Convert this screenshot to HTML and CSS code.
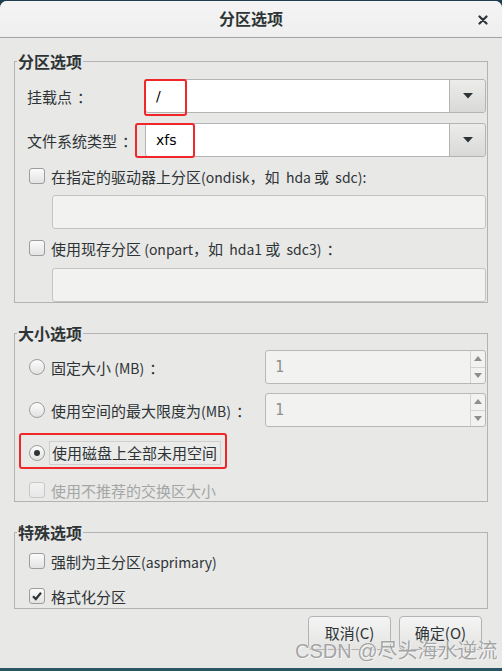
FILE: index.html
```
<!DOCTYPE html>
<html lang="zh-CN">
<head>
<meta charset="utf-8">
<title>分区选项</title>
<link rel="stylesheet" href="styles.css">
</head>
<body>
<div class="window">
  <div class="titlebar">
    <span class="title">分区选项</span>
    <svg class="close" width="10" height="10" viewBox="0 0 10 10"><path d="M1.5 1.5 L8.5 8.5 M8.5 1.5 L1.5 8.5" stroke="#2e3436" stroke-width="2.2" stroke-linecap="round"/></svg>
  </div>
  <div class="content">
    <fieldset class="group">
      <legend>分区选项</legend>
      <div class="group-body g1">
        <div class="form-row">
          <span class="label">挂载点<span class="colon">：</span></span>
          <div class="combo">
            <div class="combo-entry">/</div>
            <div class="combo-btn"><svg width="10" height="6" viewBox="0 0 10 6"><polygon points="0,0 10,0 5,5.5" fill="#2e3436"/></svg></div>
            <span class="mark mark-mount"></span>
          </div>
        </div>
        <div class="form-row r2">
          <span class="label">文件系统类型<span class="colon">：</span></span>
          <div class="combo">
            <div class="combo-entry">xfs</div>
            <div class="combo-btn"><svg width="10" height="6" viewBox="0 0 10 6"><polygon points="0,0 10,0 5,5.5" fill="#2e3436"/></svg></div>
            <span class="mark mark-fs"></span>
          </div>
        </div>
        <div class="check-row c1"><span class="checkbox"></span><span>在指定的驱动器上分区<span class="lat">(ondisk</span>，如<span class="lat">&nbsp; hda </span>或<span class="lat">&nbsp; sdc):</span></span></div>
        <div class="entry-disabled e1"></div>
        <div class="check-row c2"><span class="checkbox"></span><span>使用现存分区<span class="lat"> (onpart</span>，如<span class="lat">&nbsp; hda1 </span>或<span class="lat">&nbsp; sdc3)</span><span class="colon">：</span></span></div>
        <div class="entry-disabled e2"></div>
      </div>
    </fieldset>

    <fieldset class="group g-size">
      <legend>大小选项</legend>
      <div class="group-body g2">
        <div class="radio-row">
          <span class="radio"></span><span>固定大小<span class="lat"> (MB)</span><span class="colon">：</span></span>
          <div class="spin"><span class="spin-val">1</span><div class="stepper"><span class="step"><svg width="8" height="5" viewBox="0 0 8 5"><polygon points="0,5 8,5 4,0" fill="#8d8f8e"/></svg></span><span class="step"><svg width="8" height="5" viewBox="0 0 8 5"><polygon points="0,0 8,0 4,5" fill="#8d8f8e"/></svg></span></div></div>
        </div>
        <div class="radio-row rr2">
          <span class="radio"></span><span>使用空间的最大限度为<span class="lat">(MB)</span><span class="colon">：</span></span>
          <div class="spin"><span class="spin-val">1</span><div class="stepper"><span class="step"><svg width="8" height="5" viewBox="0 0 8 5"><polygon points="0,5 8,5 4,0" fill="#8d8f8e"/></svg></span><span class="step"><svg width="8" height="5" viewBox="0 0 8 5"><polygon points="0,0 8,0 4,5" fill="#8d8f8e"/></svg></span></div></div>
        </div>
        <div class="radio-row rr3">
          <span class="radio checked"></span><span class="focus">使用磁盘上全部未用空间</span>
          <span class="mark mark-radio"></span>
        </div>
        <div class="check-row disabled c3"><span class="checkbox"></span><span>使用不推荐的交换区大小</span></div>
      </div>
    </fieldset>

    <fieldset class="group g-special">
      <legend>特殊选项</legend>
      <div class="group-body g3">
        <div class="check-row c4"><span class="checkbox"></span><span>强制为主分区<span class="lat">(asprimary)</span></span></div>
        <div class="check-row c5"><span class="checkbox checked"><svg width="12" height="12" viewBox="0 0 12 12"><path d="M2 6.2 L4.8 9 L10 2.8" stroke="#2e3436" stroke-width="2.2" fill="none"/></svg></span><span>格式化分区</span></div>
      </div>
    </fieldset>

    <div class="buttons">
      <button class="btn">取消(C)</button>
      <button class="btn">确定(O)</button>
    </div>
  </div>
  <div class="watermark">CSDN @尽头海水逆流</div>
</div>
</body>
</html>
```

FILE: styles.css
```
* { box-sizing: border-box; }
html, body { margin: 0; padding: 0; }
body {
  width: 502px;
  height: 671px;
  overflow: hidden;
  background: linear-gradient(#1f3d4f, #2a5563);
  font-family: "Noto Sans CJK SC", "DejaVu Sans", sans-serif;
  font-size: 15px;
  color: #2e3436;
}
.window {
  position: relative;
  margin-top: 1px;
  height: 667px;
  border-radius: 7px 7px 0 0;
  background: #e8e8e7;
  overflow: hidden;
  display: flex;
  flex-direction: column;
}
.titlebar {
  height: 37px;
  flex: none;
  background: linear-gradient(#f4f4f4, #efefef);
  border-bottom: 1px solid #a3a3a3;
  display: flex;
  align-items: center;
  justify-content: center;
  position: relative;
}
.title {
  font-weight: bold;
  font-size: 16px;
  line-height: 20px;
  margin-top: -2px;
}
.close {
  position: absolute;
  right: 14px;
  top: 14px;
}
.content {
  flex: 1;
  padding: 14px 14px 0 14px;
  display: flex;
  flex-direction: column;
}
.group {
  margin: 0;
  padding: 0;
  border: 1px solid #b3b3b3;
  min-width: 0;
}
.group legend {
  font-weight: bold;
  font-size: 16px;
  line-height: 18px;
  padding: 0 1px;
  margin-left: 2px;
}
.g-size, .g-special { margin-top: 21px; }
.group-body {
  padding: 0 1px 0 12px;
  display: flex;
  flex-direction: column;
}
.g1 { padding-top: 9px; }
.g2 { padding-top: 8px; }
.g3 { padding-top: 9px; padding-bottom: 1px; }

.lat { font-size: 14px; }
.colon {
  display: inline-block;
  padding-left: 5px;
}

.form-row {
  display: flex;
  align-items: center;
  height: 34px;
}
.form-row.r2 { margin-top: 10px; }
.label {
  width: 118px;
  flex: none;
}
.combo {
  flex: 1;
  height: 34px;
  display: flex;
  border: 1px solid #b4b4b4;
  border-radius: 3px;
  position: relative;
}
.combo-entry {
  flex: 1;
  background: #fff;
  border-radius: 3px 0 0 3px;
  padding-left: 10px;
  line-height: 32px;
  color: #000;
  font-family: "DejaVu Sans", sans-serif;
  font-size: 14px;
}
.combo-btn {
  width: 36px;
  flex: none;
  border-left: 1px solid #b4b4b4;
  border-radius: 0 3px 3px 0;
  background: linear-gradient(#ececeb, #d9d9d8);
  display: flex;
  align-items: center;
  justify-content: center;
}
.mark {
  position: absolute;
  border: 2px solid #f0262a;
  border-radius: 3px;
  pointer-events: none;
}
.mark-mount { left: -2px; top: -1px; width: 43px; height: 37px; }
.mark-fs { left: -11px; top: -1px; width: 60px; height: 35px; }

.check-row {
  display: flex;
  align-items: center;
  height: 22px;
  padding-left: 2px;
  gap: 6px;
}
.c1 { margin-top: 8px; }
.c2 { margin-top: 8px; }
.c3 { margin-top: 9px; }
.c5 { margin-top: 13px; }
.check-row.disabled { color: #a4a6a5; }
.checkbox {
  width: 16px;
  height: 16px;
  flex: none;
  border: 1px solid #9d9d9d;
  border-radius: 3px;
  background: linear-gradient(#fbfbfb, #e3e3e3);
  display: flex;
  align-items: center;
  justify-content: center;
}
.disabled .checkbox {
  border-color: #c7c7c7;
  background: linear-gradient(#f2f2f2, #e8e8e8);
}
.entry-disabled {
  margin-left: 25px;
  height: 34px;
  border: 1px solid #c3c3c3;
  border-radius: 3px;
  background: #f2f2f1;
}
.e1 { margin-top: 8px; }
.e2 { margin-top: 9px; }

.radio-row {
  display: flex;
  align-items: center;
  height: 34px;
  padding-left: 2px;
  gap: 6px;
  position: relative;
}
.rr2, .rr3 { margin-top: 9px; }
.radio {
  width: 16px;
  height: 16px;
  flex: none;
  border: 1px solid #9d9d9d;
  border-radius: 50%;
  background: linear-gradient(#fdfdfd, #e1e1e1);
  display: flex;
  align-items: center;
  justify-content: center;
}
.radio.checked::after {
  content: "";
  width: 6px;
  height: 6px;
  border-radius: 50%;
  background: #2e3436;
}
.focus {
  margin-left: -2px;
  padding: 1px 3px 1px 2px;
  border: 1px solid #cfcfcf;
  background: #ebebea;
  line-height: 20px;
}
.mark-radio { left: -8px; top: -3px; width: 208px; height: 36px; }

.spin {
  margin-left: auto;
  width: 221px;
  height: 34px;
  border: 1px solid #b8b8b8;
  border-radius: 3px;
  background: #f2f2f1;
  display: flex;
}
.spin-val {
  flex: 1;
  padding-left: 9px;
  line-height: 32px;
  color: #8e908f;
  font-family: "DejaVu Sans Mono", monospace;
  font-size: 15px;
}
.stepper {
  width: 15px;
  flex: none;
  border-left: 1px solid #d3d3d3;
  display: flex;
  flex-direction: column;
}
.step {
  flex: 1;
  display: flex;
  align-items: center;
  justify-content: center;
}
.step + .step { border-top: 1px solid #d3d3d3; }

.buttons {
  margin-top: 7px;
  padding-right: 6px;
  display: flex;
  justify-content: flex-end;
  gap: 8px;
}
.btn {
  width: 83px;
  height: 34px;
  border: 1px solid #b3b3b3;
  border-radius: 4px;
  background: linear-gradient(#f4f4f4, #e4e4e3);
  font-family: "Noto Sans CJK SC", "DejaVu Sans", sans-serif;
  font-size: 15px;
  color: #2e3436;
  padding: 6px 0 0 0;
  line-height: 20px;
  display: flex;
  justify-content: center;
  align-items: flex-start;
}
.watermark {
  position: absolute;
  left: 295px;
  top: 638px;
  font-family: "Liberation Sans", "Noto Sans CJK SC", sans-serif;
  font-size: 20px;
  line-height: 24px;
  color: #a3a5a5;
  text-shadow: 0 0 1px #ffffff, 1px 1px 0 #f5f5f5;
  white-space: nowrap;
}
```
